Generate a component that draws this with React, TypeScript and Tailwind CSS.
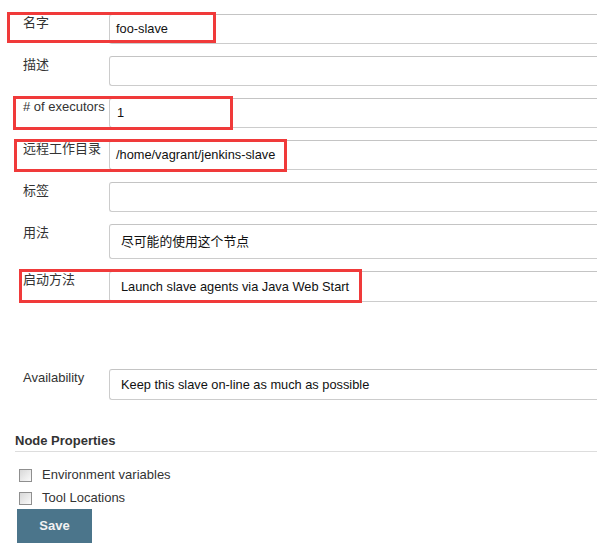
const rows = [
  { label: "名字", value: "foo-slave", h: "h-[30px]", pl: "pl-[6px]" },
  { label: "描述", value: "", h: "h-[30px]", pl: "pl-[6px]" },
  { label: "# of executors", value: "1", h: "h-[30px]", pl: "pl-[7px]" },
  { label: "远程工作目录", value: "/home/vagrant/jenkins-slave", h: "h-[30px]", pl: "pl-[6px]" },
  { label: "标签", value: "", h: "h-[30px]", pl: "pl-[6px]" },
  { label: "用法", value: "尽可能的使用这个节点", h: "h-[35px]", pl: "pl-[11px]" },
  { label: "启动方法", value: "Launch slave agents via Java Web Start", h: "h-[31px]", pl: "pl-[11px]" },
];

const Row = ({ label, value, h, pl }: { label: string; value: string; h: string; pl: string }) => (
  <div className="flex">
    <div className="w-[109px] shrink-0 pl-[23px] pt-[1px] text-[13px] leading-[16px] text-[#333]">
      {label}
    </div>
    <div
      className={`${h} ${pl} flex flex-1 items-center rounded-l-[3px] border border-r-0 border-[#ccc] border-t-[#c4c4c4] bg-white text-[12.8px] text-[#111] mr-[2px]`}
    >
      {value}
    </div>
  </div>
);

const Checkbox = ({ label }: { label: string }) => (
  <div className="flex items-center h-[16px]">
    <span className="ml-[19px] w-[13px] h-[13px] border border-[#8f8f8f] bg-gradient-to-br from-[#d8d8d8] to-[#fafafa]" />
    <span className="ml-[10px] text-[13px] leading-[16px] text-[#333]">{label}</span>
  </div>
);

export default function App() {
  return (
    <div
      className="relative w-[599px] h-[553px] overflow-hidden bg-white"
      style={{ fontFamily: '"Liberation Sans", Arial, "Noto Sans CJK SC", sans-serif' }}
    >
      <div className="flex flex-col gap-[12px] pt-[14px]">
        {rows.map((r) => (
          <Row key={r.label} {...r} />
        ))}
      </div>

      <div className="mt-[67px]">
        <Row label="Availability" value="Keep this slave on-line as much as possible" h="h-[31px]" pl="pl-[11px]" />
      </div>

      <div className="mt-[33px] ml-[15px] mr-[2px] border-b border-[#ddd] pb-[2px] text-[13px] leading-[16px] font-bold text-[#333]">
        Node Properties
      </div>

      <div className="mt-[15px] flex flex-col gap-[7px]">
        <Checkbox label="Environment variables" />
        <Checkbox label="Tool Locations" />
      </div>

      <button className="mt-[3px] ml-[17px] w-[75px] h-[34px] bg-[#4b758b] text-[13px] font-bold text-[#f2f2f2]">
        Save
      </button>

      {/* red annotation boxes */}
      <div className="absolute left-[7px] top-[12px] w-[209px] h-[31px] border-[3px] border-[#f03a3a]" />
      <div className="absolute left-[13px] top-[96px] w-[220px] h-[34px] border-[3px] border-[#f03a3a]" />
      <div className="absolute left-[14px] top-[139px] w-[273px] h-[33px] border-[3px] border-[#f03a3a]" />
      <div className="absolute left-[19px] top-[269px] w-[343px] h-[34px] border-[3px] border-[#f03a3a]" />
    </div>
  );
}
